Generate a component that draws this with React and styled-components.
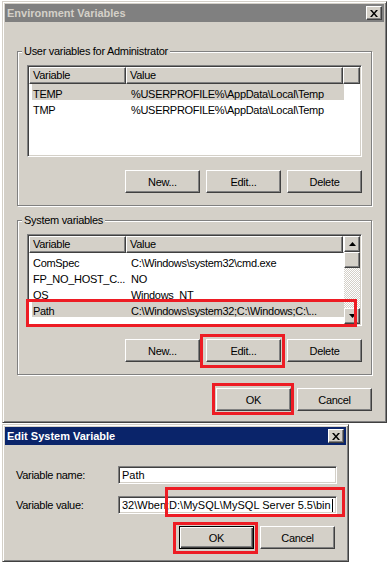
import React from "react";
import styled, { createGlobalStyle, css } from "styled-components";

const GlobalStyle = createGlobalStyle`
  html, body {
    margin: 0;
    padding: 0;
    background: #fff;
  }
  body {
    font-family: "Liberation Sans", Arial, sans-serif;
    font-size: 11px;
    letter-spacing: -0.3px;
    color: #000;
  }
  * {
    box-sizing: border-box;
  }
`;

const raised = css`
  border: 1px solid;
  border-color: #fff #404040 #404040 #fff;
  box-shadow: inset -1px -1px 0 #808080, inset 1px 1px 0 #d4d0c8;
`;

const sunken = css`
  border: 1px solid;
  border-color: #808080 #fff #fff #808080;
  box-shadow: inset 1px 1px 0 #404040, inset -1px -1px 0 #d4d0c8;
`;

const Page = styled.div`
  width: 387px;
  height: 566px;
  overflow: hidden;
  background: #fff;
  display: flex;
  flex-direction: column;
  align-items: flex-start;
`;

const Window = styled.div`
  flex-shrink: 0;
  width: ${(p) => p.$width}px;
  margin: 1px 0 0 2px;
  padding: 2px;
  background: #d4d0c8;
  border: 1px solid;
  border-color: #d4d0c8 #404040 #404040 #d4d0c8;
  box-shadow: inset 1px 1px 0 #fff, inset -1px -1px 0 #808080;
`;

const TitleBar = styled.div`
  display: flex;
  align-items: center;
  justify-content: space-between;
  height: 18px;
  padding: 0 2px;
  background: ${(p) => (p.$active ? "#0a246a" : "#808080")};
  color: ${(p) => (p.$active ? "#fff" : "#d4d0c8")};
  font-weight: bold;
  letter-spacing: 0;
  line-height: 18px;
`;

const CloseBox = styled.div`
  display: flex;
  align-items: center;
  justify-content: center;
  width: 16px;
  height: 14px;
  background: #d4d0c8;
  ${raised}
`;

const Body = styled.div`
  display: flex;
  flex-direction: column;
  padding: 29px 12px 9px 12px;
`;

const Group = styled.div`
  position: relative;
  display: flex;
  flex-direction: column;
  margin-top: ${(p) => p.$gap || 0}px;
  padding: 13px 9px 12px 9px;
  border: 1px solid #808080;
  box-shadow: 1px 1px 0 #fff, inset 1px 1px 0 #fff;
`;

const Legend = styled.span`
  position: absolute;
  top: -7px;
  left: 4px;
  padding: 0 2px;
  line-height: 13px;
  background: #d4d0c8;
`;

const ListBox = styled.div`
  position: relative;
  display: flex;
  height: 92px;
  padding: 1px;
  background: #fff;
  ${sunken}
`;

const Table = styled.div`
  flex: 1;
  min-width: 0;
  display: flex;
  flex-direction: column;
  overflow: hidden;
`;

const Header = styled.div`
  display: flex;
  flex-shrink: 0;
  height: 17px;
`;

const HeaderCell = styled.div`
  ${(p) => (p.$w ? `width: ${p.$w}px;` : "flex: 1;")}
  flex-shrink: 0;
  padding-left: 3px;
  line-height: 15px;
  background: #d4d0c8;
  white-space: nowrap;
  ${raised}
`;

const Row = styled.div`
  display: flex;
  flex-shrink: 0;
  width: 312px;
  height: 16px;
  margin-left: 3px;
  background: ${(p) => (p.$selected ? "#d4d0c8" : "transparent")};
`;

const Cell = styled.div`
  ${(p) => (p.$w ? `width: ${p.$w}px;` : "flex: 1;")}
  flex-shrink: 0;
  min-width: 0;
  height: 16px;
  padding: 2px 0 0 ${(p) => p.$pad}px;
  line-height: 16px;
  white-space: nowrap;
  overflow: hidden;
`;

const Scrollbar = styled.div`
  display: flex;
  flex-direction: column;
  flex-shrink: 0;
  width: 16px;
`;

const ScrollButton = styled.div`
  display: flex;
  align-items: center;
  justify-content: center;
  height: 16px;
  flex-shrink: 0;
  background: #d4d0c8;
  ${raised}
`;

const Track = styled.div`
  flex: 1;
  background-color: #fff;
  background-image: repeating-conic-gradient(#d4d0c8 0% 25%, #fff 0% 50%);
  background-size: 2px 2px;
`;

const ButtonRow = styled.div`
  display: flex;
  justify-content: flex-end;
  gap: 6px;
  margin-top: ${(p) => p.$mt}px;
`;

const Button = styled.button`
  width: 75px;
  height: 23px;
  margin: 0;
  padding: 0;
  font-family: "Liberation Sans", Arial, sans-serif;
  font-size: 11px;
  letter-spacing: -0.3px;
  color: #000;
  background: #d4d0c8;
  ${raised}
  ${(p) =>
    p.$default &&
    css`
      border-color: #000;
      box-shadow: inset 1px 1px 0 #fff, inset -1px -1px 0 #404040,
        inset -2px -2px 0 #808080;
    `}
`;

const Marked = styled.div`
  position: relative;
  display: flex;
`;

const Mark = styled.div`
  position: absolute;
  top: ${(p) => p.$t}px;
  right: ${(p) => p.$r}px;
  bottom: ${(p) => p.$b}px;
  left: ${(p) => p.$l}px;
  border: 3px solid #ed1c24;
  pointer-events: none;
`;

const FormBody = styled.div`
  display: flex;
  flex-direction: column;
  padding: 21px 11px 10px 11px;
`;

const FormGrid = styled.div`
  display: grid;
  grid-template-columns: 102px 1fr;
  row-gap: 12px;
  align-items: center;
`;

const Label = styled.div`
  line-height: 18px;
`;

const Field = styled.div`
  display: flex;
  align-items: center;
  height: 18px;
  padding: 1px 3px;
  background: #fff;
  white-space: nowrap;
  overflow: hidden;
  line-height: 14px;
  letter-spacing: 0;
  ${sunken}
`;

const FieldWrap = styled.div`
  position: relative;
`;

const Caret = styled.span`
  display: inline-block;
  width: 1px;
  height: 13px;
  margin-left: 1px;
  background: #000;
`;

const CloseIcon = () => (
  <svg width="8" height="7" viewBox="0 0 8 7">
    <polygon points="0,0 2,0 4,2.5 6,0 8,0 5,3.5 8,7 6,7 4,4.5 2,7 0,7 3,3.5" fill="#000" />
  </svg>
);

const Arrow = ({ down }) => (
  <svg width="7" height="4" viewBox="0 0 7 4">
    <polygon points={down ? "0,0 7,0 3.5,4" : "0,4 3.5,0 7,4"} fill="#000" />
  </svg>
);

const userVars = [
  { name: "TEMP", value: "%USERPROFILE%\\AppData\\Local\\Temp", selected: true },
  { name: "TMP", value: "%USERPROFILE%\\AppData\\Local\\Temp" },
];

const systemVars = [
  { name: "ComSpec", value: "C:\\Windows\\system32\\cmd.exe" },
  { name: "FP_NO_HOST_C...", value: "NO" },
  { name: "OS", value: "Windows_NT" },
  { name: "Path", value: "C:\\Windows\\system32;C:\\Windows;C:\\...", selected: true },
];

function VarList({ rows }) {
  return (
    <Table>
      <Header>
        <HeaderCell $w={97}>Variable</HeaderCell>
        <HeaderCell $w={217}>Value</HeaderCell>
        <HeaderCell />
      </Header>
      {rows.map((r) => (
        <Row key={r.name} $selected={r.selected}>
          <Cell $w={94} $pad={1}>{r.name}</Cell>
          <Cell $pad={5}>{r.value}</Cell>
        </Row>
      ))}
    </Table>
  );
}

function EnvironmentDialog() {
  return (
    <Window $width={385}>
      <TitleBar>
        <span>Environment Variables</span>
        <CloseBox>
          <CloseIcon />
        </CloseBox>
      </TitleBar>
      <Body>
        <Group>
          <Legend>User variables for Administrator</Legend>
          <ListBox>
            <VarList rows={userVars} />
          </ListBox>
          <ButtonRow $mt={13}>
            <Button>New...</Button>
            <Button>Edit...</Button>
            <Button>Delete</Button>
          </ButtonRow>
        </Group>
        <Group $gap={14}>
          <Legend>System variables</Legend>
          <ListBox>
            <VarList rows={systemVars} />
            <Scrollbar>
              <ScrollButton>
                <Arrow />
              </ScrollButton>
              <ScrollButton />
              <Track />
              <ScrollButton>
                <Arrow down />
              </ScrollButton>
            </Scrollbar>
            <Mark $t={64} $r={4} $b={-2} $l={-2} />
          </ListBox>
          <ButtonRow $mt={13}>
            <Button>New...</Button>
            <Marked>
              <Button>Edit...</Button>
              <Mark $t={-5} $r={-4} $b={-6} $l={-6} />
            </Marked>
            <Button>Delete</Button>
          </ButtonRow>
        </Group>
        <ButtonRow $mt={13}>
          <Marked>
            <Button>OK</Button>
            <Mark $t={-5} $r={-3} $b={-4} $l={-4} />
          </Marked>
          <Button>Cancel</Button>
        </ButtonRow>
      </Body>
    </Window>
  );
}

function EditDialog() {
  return (
    <Window $width={347}>
      <TitleBar $active>
        <span>Edit System Variable</span>
        <CloseBox>
          <CloseIcon />
        </CloseBox>
      </TitleBar>
      <FormBody>
        <FormGrid>
          <Label>Variable name:</Label>
          <Field>Path</Field>
          <Label>Variable value:</Label>
          <FieldWrap>
            <Field>
              32\Wben;D:\MySQL\MySQL Server 5.5\bin
              <Caret />
            </Field>
            <Mark $t={-9} $r={-8} $b={-3} $l={47} />
          </FieldWrap>
        </FormGrid>
        <ButtonRow $mt={12}>
          <Marked>
            <Button $default>OK</Button>
            <Mark $t={-4} $r={-4} $b={-5} $l={-6} />
          </Marked>
          <Button>Cancel</Button>
        </ButtonRow>
      </FormBody>
    </Window>
  );
}

export default function App() {
  return (
    <>
      <GlobalStyle />
      <Page>
        <EnvironmentDialog />
        <EditDialog />
      </Page>
    </>
  );
}
